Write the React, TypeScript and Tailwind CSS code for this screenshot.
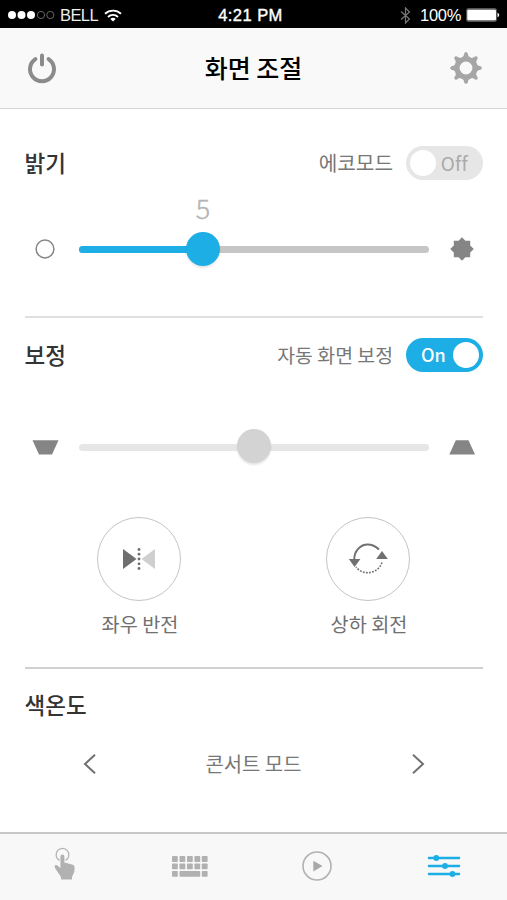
import { useState } from 'react'
import type { ReactNode } from 'react'

const tabs = ['touch', 'keyboard', 'play', 'settings'] as const
const modes = ['콘서트 모드']

function StatusBar() {
  return (
    <div className="grid h-7 grid-cols-[1fr_auto_1fr] items-center bg-black font-['Liberation_Sans',sans-serif] text-[16.5px] leading-[26px] text-white">
      <div className="flex items-center pt-[2px] pl-[8px]">
        <svg width="47" height="10" viewBox="0 0 47 10">
          <circle cx="4" cy="5" r="4" fill="#fff" />
          <circle cx="13.5" cy="5" r="4" fill="#fff" />
          <circle cx="23" cy="5" r="4" fill="#fff" />
          <circle cx="33" cy="5" r="3.6" fill="none" stroke="#666" />
          <circle cx="42.3" cy="5" r="3.6" fill="none" stroke="#666" />
        </svg>
        <span className="ml-[5px] w-[39px] tracking-[-0.6px] text-[#eee]">BELL</span>
        <svg className="ml-[5px]" width="18" height="13" viewBox="0 0 18 13" fill="none" stroke="#fff" strokeWidth="1.9">
          <path d="M1 4.8C5.4.5 12.6.5 17 4.8" />
          <path d="M4 8C6.8 5.2 11.2 5.2 14 8" />
          <path d="M9 12.6 6.3 9.9C7.8 8.5 10.2 8.5 11.7 9.9Z" fill="#fff" stroke="none" />
        </svg>
      </div>
      <span className="pt-[2px] pr-[6px] tracking-[0.45px] [-webkit-text-stroke:0.4px_#fff]">4:21 PM</span>
      <div className="flex items-center justify-end pt-[2px] pr-[7px]">
        <svg width="11" height="17" viewBox="0 0 11 17" fill="none" stroke="#777" strokeWidth="1.2">
          <path d="M1 4.5 9.5 12 5.5 16V1L9.5 5 1 12.5" />
        </svg>
        <span className="ml-[9px] w-[41px] tracking-[-0.3px]">100%</span>
        <svg className="ml-[5px]" width="34" height="14" viewBox="0 0 34 14">
          <rect x=".5" y=".5" width="30" height="13" rx="1.5" fill="none" stroke="#555" />
          <rect x="1.2" y="1.5" width="28.8" height="11" rx="1" fill="#fff" />
          <path d="M31.5 4.5Q35 7 31.5 9.5Z" fill="#fff" />
        </svg>
      </div>
    </div>
  )
}

function PowerIcon() {
  return (
    <svg width="30" height="32" viewBox="0 0 30 32" fill="none" stroke="#8b8b8b" strokeWidth="4" strokeLinecap="round">
      <path d="M8.4 7.2A12 12 0 1 0 21.6 7.2" />
      <path d="M15 3.4V12.6" />
    </svg>
  )
}

function GearIcon() {
  return (
    <svg width="34" height="34" viewBox="-17 -17 34 34">
      <circle r="9" fill="none" stroke="#a6a6a6" strokeWidth="5.2" />
      {[0, 45, 90, 135, 180, 225, 270, 315].map((deg) => (
        <path key={deg} transform={`rotate(${deg})`} d="M-4-10.5Q-2-11.5-1.8-14.5Q0-17.4 1.8-14.5Q2-11.5 4-10.5Z" fill="#a6a6a6" />
      ))}
    </svg>
  )
}

function Toggle({ on, onClick }: { on: boolean; onClick: () => void }) {
  return (
    <button
      onClick={onClick}
      className={`flex h-[34px] w-[77px] items-center justify-between rounded-full px-1 ${on ? 'bg-[#1caee4]' : 'bg-[#e6e6e6]'}`}
    >
      {on && <span className="pb-[3px] pl-[11px] text-[18px] leading-none font-medium text-white">On</span>}
      <span className="size-[26px] rounded-full bg-white" />
      {!on && <span className="pr-[11px] pb-[2px] text-[19px] leading-none tracking-[0.3px] text-[#aaa]">Off</span>}
    </button>
  )
}

function SectionHead({ title, label, children }: { title: string; label?: ReactNode; children?: ReactNode }) {
  return (
    <div className="flex h-[34px] items-center">
      <h2 className="-ml-[0.5px] flex-1 pb-px text-[22.5px] font-medium text-[#333]">{title}</h2>
      {label}
      {children}
    </div>
  )
}

function Slider({ value, disabled }: { value: number; disabled?: boolean }) {
  return (
    <div className={`relative h-[7px] w-[350px] rounded-full ${disabled ? 'bg-[#e6e6e6]' : 'bg-[#c6c6c6]'}`}>
      {!disabled && <div className="h-full rounded-full bg-[#1caee4]" style={{ width: `${value}%` }} />}
      {!disabled && (
        <span className="absolute bottom-[32px] w-8 -translate-x-1/2 text-center text-[27px] leading-[27px] font-light text-[#b5b5b5] [-webkit-text-stroke:0.4px_#b5b5b5]" style={{ left: `${value}%` }}>
          5
        </span>
      )}
      <span
        className={`absolute size-[34px] -translate-x-1/2 rounded-full shadow-[0_2px_2px_rgba(0,0,0,0.1)] ${disabled ? '-top-[15px] bg-[#d3d3d3]' : '-top-[14px] bg-[#1caee4]'}`}
        style={{ left: `${value}%` }}
      />
    </div>
  )
}

function RoundAction({ label, children }: { label: string; children: ReactNode }) {
  return (
    <button className="flex w-[86px] flex-col items-center">
      <span className="flex size-[84px] items-center justify-center rounded-full border border-[#c4c4c4]">{children}</span>
      <span className="mt-[8px] pl-[2px] text-[19.7px] leading-[30px] whitespace-nowrap text-[#707070]">{label}</span>
    </button>
  )
}

function FlipIcon() {
  return (
    <svg width="34" height="24" viewBox="0 0 34 24">
      <path d="M1 2V22L14.5 12Z" fill="#6f6f6f" />
      <path d="M33 2V22L19.5 12Z" fill="#cfcfcf" />
      {[2.5, 7.2, 12, 16.8, 21.5].map((y) => (
        <circle key={y} cx="17" cy={y} r="1.4" fill="#6f6f6f" />
      ))}
    </svg>
  )
}

function RotateIcon() {
  return (
    <svg width="40" height="34" viewBox="0 0 40 34" fill="none" stroke="#707070">
      <path d="M6.3 17.5C6 8.5 13 2.5 19.5 2.5Q26 2.5 31 7.5" strokeWidth="2" />
      <path d="M34 20.5A15 15 0 0 1 8 25" strokeWidth="1.6" strokeDasharray="1.8 1.3" />
      <path d="M.8 17H12.4L6.6 25Z" fill="#707070" stroke="none" />
      <path d="M28.2 17H39.8L34 9Z" fill="#707070" stroke="none" />
    </svg>
  )
}

function TabIcon({ name }: { name: string }) {
  if (name === 'touch') {
    return (
      <svg className="mb-[7px] ml-[3px]" width="22" height="34" viewBox="0 0 22 34" fill="#b1b1b1">
        <path d="M5.5 13.4A6.4 6.4 0 1 1 11.5 13.4" fill="none" stroke="#b1b1b1" strokeWidth="1.2" />
        <path d="M6.4 9.5Q6.4 7.5 8.4 7.5T10.4 9.5V15.5L18 17.5Q20.8 18.3 20.6 21L20.3 25 18 30V32.5H7V30L1 21 .7 19Q1.3 17.4 3 18.2L6.4 21Z" />
      </svg>
    )
  }
  if (name === 'keyboard') {
    return (
      <svg width="36" height="22" viewBox="0 0 36 22" fill="#b1b1b1">
        {[0, 7.5, 15, 22.4, 29.8].map((x) => (
          <g key={x}>
            <rect x={x} y="0" width="5.8" height="6" rx=".8" />
            <rect x={x} y="7.5" width="5.8" height="5.8" rx=".8" />
          </g>
        ))}
        <rect x="0" y="15" width="5.8" height="5.8" rx=".8" />
        <rect x="7.5" y="15" width="20.7" height="5.8" rx=".8" />
        <rect x="29.8" y="15" width="5.8" height="5.8" rx=".8" />
      </svg>
    )
  }
  if (name === 'play') {
    return (
      <svg className="mb-[2px]" width="30" height="30" viewBox="0 0 30 30">
        <circle cx="15" cy="15" r="14" fill="none" stroke="#b1b1b1" strokeWidth="1.6" />
        <path d="M11.3 9.8V20.4L20.5 15.1Z" fill="#a8a8a8" />
      </svg>
    )
  }
  return (
    <svg className="mb-[2px]" width="34" height="24" viewBox="0 0 34 24" stroke="#1caee4" strokeWidth="2.5" strokeLinecap="round" fill="#1caee4">
      <path d="M2 4H32M2 12H32M2 20H32" />
      <g stroke="none">
        <circle cx="9.3" cy="4" r="2.9" />
        <circle cx="18" cy="12" r="2.9" />
        <circle cx="25.5" cy="20" r="2.9" />
      </g>
    </svg>
  )
}

export default function App() {
  const [eco, setEco] = useState(false)
  const [auto, setAuto] = useState(true)
  const [active, setActive] = useState('settings')

  return (
    <div className="flex h-[900px] w-[507px] flex-col overflow-hidden bg-white font-['Noto_Sans_CJK_KR',sans-serif]">
      <StatusBar />
      <header className="flex h-[81px] items-center justify-between border-b border-[#d8d8d8] bg-[#f9f9f9] pr-6 pl-[27px]">
        <PowerIcon />
        <h1 className="pl-px text-[25px] font-medium text-black">화면 조절</h1>
        <GearIcon />
      </header>

      <main className="flex flex-1 flex-col pr-6 pl-[25px]">
        <section className="h-[209px] border-b-2 border-[#e0e0e0] pt-[37px]">
          <SectionHead title="밝기" label={<span className="mr-[13px] text-[20.2px] text-[#777]">에코모드</span>}>
            <Toggle on={eco} onClick={() => setEco(!eco)} />
          </SectionHead>
          <div className="mt-[57px] flex h-6 items-center pr-[9px] pl-[10px]">
            <svg className="mr-[24px]" width="20" height="20" viewBox="0 0 20 20">
              <circle cx="10" cy="10" r="8.9" fill="none" stroke="#858585" strokeWidth="1.5" />
            </svg>
            <Slider value={35.4} />
            <svg className="ml-auto" width="24" height="24" viewBox="-12 -12 24 24" fill="#858585">
              <path d="M0-11.8 3.4-8.2H8.2V-3.4L11.8 0 8.2 3.4V8.2H3.4L0 11.8-3.4 8.2H-8.2V3.4L-11.8 0-8.2-3.4V-8.2H-3.4Z" />
            </svg>
          </div>
        </section>

        <section className="h-[351px] border-b-2 border-[#d0d0d0] pt-[20px]">
          <SectionHead title="보정" label={<span className="mr-[13px] text-[19.4px] text-[#777]">자동 화면 보정</span>}>
            <Toggle on={auto} onClick={() => setAuto(!auto)} />
          </SectionHead>
          <div className="mt-[63px] flex h-6 items-center pr-2 pl-[7px]">
            <svg className="mr-5" width="27" height="15" viewBox="0 0 27 15">
              <path d="M.5.3H26.5L20 14.5H7Z" fill="#858585" />
            </svg>
            <Slider value={50} disabled />
            <svg className="ml-auto" width="26" height="15" viewBox="0 0 26 15">
              <path d="M6.8.3H19.5L26 14.5H.3Z" fill="#858585" />
            </svg>
          </div>
          <div className="mt-[58px] flex justify-between pr-[72px] pl-[71px]">
            <RoundAction label="좌우 반전">
              <FlipIcon />
            </RoundAction>
            <RoundAction label="상하 회전">
              <RotateIcon />
            </RoundAction>
          </div>
        </section>

        <section className="pt-[19px]">
          <SectionHead title="색온도" />
          <div className="mt-[27px] flex h-[30px] items-center justify-between pr-[58px] pl-[58px]">
            <svg width="14" height="20" viewBox="0 0 14 20" fill="none" stroke="#707070" strokeWidth="2">
              <path d="M12 .8 2 10 12 19.2" />
            </svg>
            <span className="pr-px text-[19.9px] text-[#777]">{modes[0]}</span>
            <svg width="14" height="20" viewBox="0 0 14 20" fill="none" stroke="#707070" strokeWidth="2">
              <path d="M2 .8 12 10 2 19.2" />
            </svg>
          </div>
        </section>
      </main>

      <nav className="grid h-[68px] grid-cols-4 border-t-2 border-[#c8c8c8] bg-[#f8f8f8]">
        {tabs.map((tab) => (
          <button key={tab} onClick={() => setActive(tab)} aria-current={active === tab} className="flex items-center justify-center">
            <TabIcon name={tab} />
          </button>
        ))}
      </nav>
    </div>
  )
}
